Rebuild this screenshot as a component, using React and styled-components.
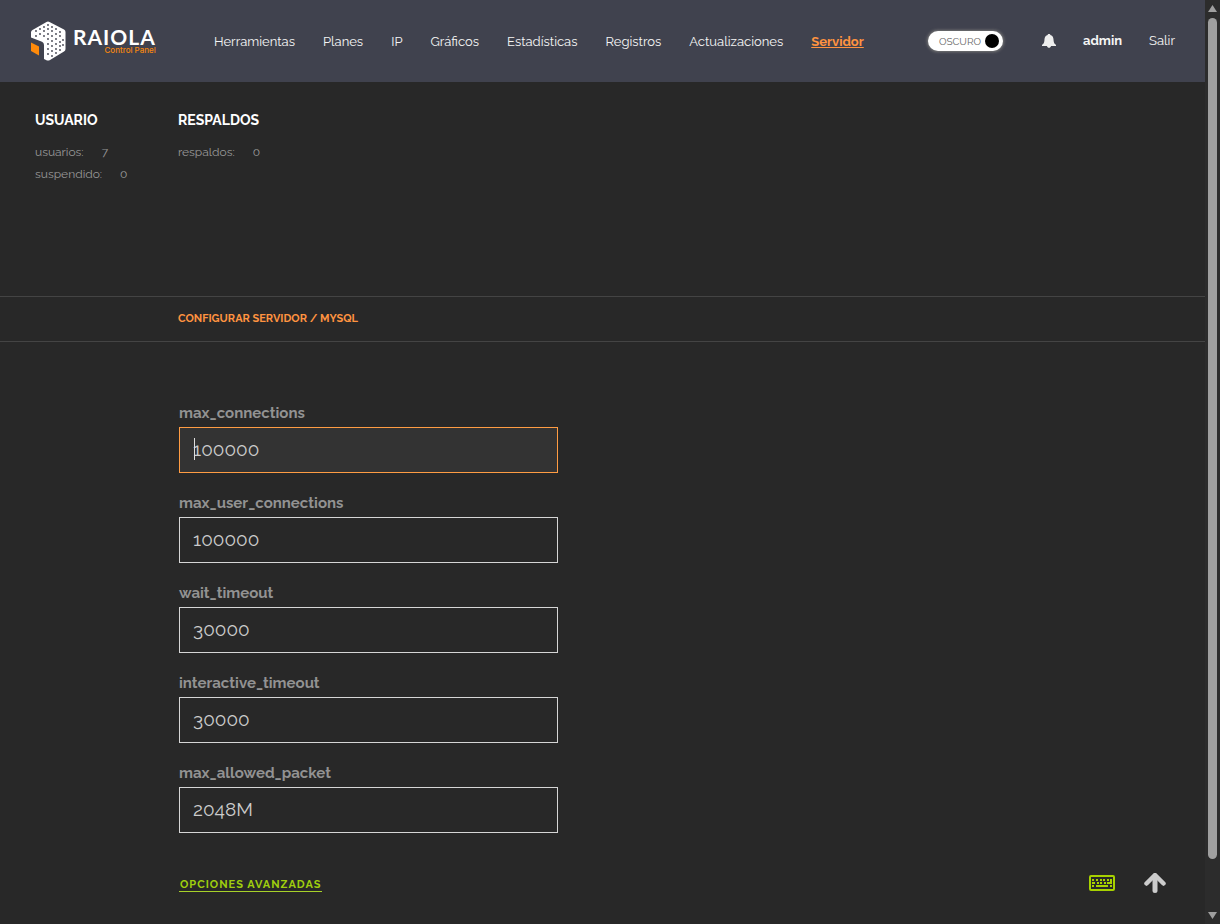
import styled, { createGlobalStyle } from 'styled-components';

const GlobalStyle = createGlobalStyle`
  * {
    box-sizing: border-box;
  }

  body {
    margin: 0;
    background: #282828;
    font-family: Raleway, Lato, sans-serif;
    font-variant-numeric: oldstyle-nums;
  }
`;

const Page = styled.div`
  display: flex;
  min-height: 100vh;
`;

const Content = styled.div`
  flex: 1;
  min-width: 0;
`;

const Header = styled.header`
  display: flex;
  align-items: center;
  height: 82px;
  padding: 0 30px;
  background: #40424e;
`;

const Logo = styled.a`
  display: flex;
  align-items: center;
  gap: 7px;
  width: 184px;
  text-decoration: none;
`;

const Wordmark = styled.span`
  display: flex;
  flex-direction: column;
  align-items: flex-end;
`;

const Brand = styled.span`
  color: #fff;
  font: 700 21px/18px Lato, sans-serif;
  letter-spacing: 1px;
`;

const Tagline = styled.span`
  color: #f7870f;
  font: 500 8px/8px Inter, sans-serif;
`;

const Nav = styled.nav`
  display: flex;
  gap: 28px;
  padding-top: 2px;
`;

const NavLink = styled.a`
  color: ${({ $active }) => ($active ? '#ff9340' : '#f5f5f5')};
  font-size: 13px;
  line-height: 20px;
  font-weight: ${({ $strong, $active }) => ($strong || $active ? 700 : 400)};
  text-decoration: ${({ $active }) => ($active ? 'underline' : 'none')};
`;

const Account = styled.div`
  display: flex;
  align-items: center;
  gap: 27px;
  margin-left: auto;
`;

const ThemeSwitch = styled.label`
  display: flex;
  align-items: center;
  gap: 4px;
  height: 20px;
  margin-right: 12px;
  padding: 0 4px 0 11px;
  border-radius: 10px;
  background: #fff;
  box-shadow: 0 0 3px 1px #777;
  color: #666;
  font-size: 10px;
`;

const ThemeCheck = styled.input`
  width: 14px;
  height: 14px;
  margin: 0;
  border-radius: 50%;
  background: #000;
  appearance: none;
`;

const IconButton = styled.button`
  display: flex;
  padding: 0;
  border: 0;
  background: none;
  color: ${({ $color }) => $color};
`;

const Stats = styled.section`
  display: flex;
  min-height: 214px;
  padding: 27px 35px;
`;

const StatGroup = styled.div`
  width: 143px;
`;

const StatTitle = styled.h2`
  margin: 0 0 10px;
  color: #fff;
  font-size: 14px;
  line-height: 22px;
`;

const StatRow = styled.p`
  display: flex;
  gap: 18px;
  margin: 0;
  color: #999;
  font-size: 12px;
  line-height: 22px;
`;

const Toolbar = styled.div`
  padding: 0 178px;
  border-top: 1px solid #444;
  border-bottom: 1px solid #444;
  color: #ff9340;
  font-size: 11px;
  font-weight: 700;
  line-height: 44px;
`;

const Form = styled.form`
  width: 379px;
  margin: 61px 0 0 179px;
`;

const Field = styled.div`
  display: flex;
  flex-direction: column;
  gap: 3px;
  margin-bottom: 20px;
`;

const FieldLabel = styled.label`
  color: #929292;
  font-size: 15px;
  font-weight: 700;
  line-height: 21px;
`;

const InputWrap = styled.div`
  position: relative;
`;

const TextInput = styled.input`
  display: block;
  width: 100%;
  height: 46px;
  padding: 0 13px 2px;
  border: 1px solid ${({ $active }) => ($active ? '#ff9c43' : '#d6d6d6')};
  background: ${({ $active }) => ($active ? '#333' : '#282828')};
  color: #ccc;
  font: inherit;
  font-size: 19px;
  font-variant-numeric: inherit;
  outline: none;
`;

const Caret = styled.span`
  position: absolute;
  top: 11px;
  left: 15px;
  width: 1px;
  height: 22px;
  background: #ddd;
`;

const AdvancedLink = styled.a`
  display: inline-block;
  margin-top: 25px;
  padding: 0 1px;
  border-bottom: 1px solid #a7d129;
  color: #9fce0e;
  font-size: 11px;
  font-weight: 700;
  letter-spacing: 1px;
  line-height: 13px;
  text-decoration: none;
`;

const Shortcuts = styled.div`
  position: fixed;
  right: 54px;
  bottom: 31px;
  display: flex;
  align-items: center;
  gap: 29px;
`;

const ScrollTrack = styled.div`
  position: sticky;
  top: 0;
  display: flex;
  flex-direction: column;
  align-items: center;
  gap: 6px;
  width: 15px;
  height: 100vh;
  padding: 5px 0;
  background: #2c2c2c;
`;

const ScrollThumb = styled.div`
  width: 9px;
  height: 92%;
  border-radius: 5px;
  background: #9f9f9f;
`;

const ScrollArrow = styled.svg`
  flex: none;
  width: 9px;
  height: 7px;
  margin-top: ${({ $end }) => ($end ? 'auto' : 0)};
  fill: #9f9f9f;
`;

const sections = [
  'Herramientas',
  'Planes',
  'IP',
  'Gráficos',
  'Estadísticas',
  'Registros',
  'Actualizaciones',
  'Servidor',
];

const fields = [
  { name: 'max_connections', value: '100000' },
  { name: 'max_user_connections', value: '100000' },
  { name: 'wait_timeout', value: '30000' },
  { name: 'interactive_timeout', value: '30000' },
  { name: 'max_allowed_packet', value: '2048M' },
];

const LogoMark = () => (
  <svg width="36" height="40" viewBox="0 0 36 40">
    <path
      d="M19.500 1 34 8.500q1.500.8 1.500 2.500v17q0 1.700-1.500 2.500L20 39q-2 1-4 0l-2-1V24q0-2.200-2-3.200L1 16.500V11.500q0-1.700 1.500-2.500L16.500 1q1.500-.9 3 0Z"
      fill="#fff"
    />
    <path d="m1 21.500 8 4V34.500l-8-4.500Z" fill="#ff8a0a" />
    <g fill="#40424e">
      {[
        [18, 4], [14, 6], [22, 6], [10, 8], [18, 8], [26, 8], [6, 10], [14, 10],
        [22, 10], [30, 11], [10, 13], [18, 13], [26, 13], [6, 15], [14, 15],
        [22, 15], [30, 15], [18, 18], [26, 18], [33, 19], [22, 20], [30, 21],
        [18, 23], [26, 23], [22, 25], [30, 25], [33, 24], [18, 28], [26, 28],
        [22, 30], [30, 29], [18, 33], [26, 32], [22, 35],
      ].map(([x, y]) => (
        <circle key={`${x}-${y}`} cx={x} cy={y} r="0.9" />
      ))}
    </g>
  </svg>
);

const BellIcon = () => (
  <svg width="14" height="14" viewBox="0 0 14 14" fill="currentColor">
    <path d="M7 0C8 0 8.300.5 8.400 1 11 1.700 11.500 4 11.600 6.500c.1 2.500 1 3.500 2.400 4.300V12H0v-1.200c1.400-.8 2.300-1.800 2.400-4.300C2.500 4 3 1.700 5.600 1 5.700.5 6 0 7 0ZM5 12h4c-.2 2.400-3.800 2.400-4 0Z" />
  </svg>
);

const KeyboardIcon = () => (
  <svg width="26" height="16" viewBox="0 0 26 16" fill="currentColor">
    <rect x="1" y="1" width="24" height="14" rx="1" fill="none" stroke="currentColor" strokeWidth="2" />
    {[3, 7, 11, 14, 18].map((x) => (
      <rect key={x} x={x} y="4" width="2" height="2" />
    ))}
    {[8, 11, 15].map((x) => (
      <rect key={x} x={x} y="7" width="2" height="2" />
    ))}
    <path d="M3 7h3v2H3zM21 4h2v5h-5V7h3zM3 10h2v2H3zM7 10h12v2H7zM21 10h2v2h-2z" />
  </svg>
);

const ArrowIcon = () => (
  <svg width="22" height="20" viewBox="0 0 22 20" fill="none" stroke="currentColor">
    <path d="m2.500 10.500 8.500-8.500 8.500 8.500" strokeWidth="4.500" strokeLinecap="round" strokeLinejoin="round" />
    <path d="M11 4v13.500" strokeWidth="5" strokeLinecap="round" />
  </svg>
);

const App = () => {
  return (
    <Page>
      <GlobalStyle />
      <Content>
        <Header>
          <Logo href="#">
            <LogoMark />
            <Wordmark>
              <Brand>RAIOLA</Brand>
              <Tagline>Control Panel</Tagline>
            </Wordmark>
          </Logo>
          <Nav>
            {sections.map((name) => (
              <NavLink key={name} href="#" $active={name === 'Servidor'}>
                {name}
              </NavLink>
            ))}
          </Nav>
          <Account>
            <ThemeSwitch>
              OSCURO
              <ThemeCheck type="checkbox" defaultChecked />
            </ThemeSwitch>
            <IconButton aria-label="Notificaciones" $color="#eee">
              <BellIcon />
            </IconButton>
            <NavLink href="#" $strong>
              admin
            </NavLink>
            <NavLink href="#">Salir</NavLink>
          </Account>
        </Header>
        <Stats>
          <StatGroup>
            <StatTitle>USUARIO</StatTitle>
            <StatRow>
              <span>usuarios:</span>
              <span>7</span>
            </StatRow>
            <StatRow>
              <span>suspendido:</span>
              <span>0</span>
            </StatRow>
          </StatGroup>
          <StatGroup>
            <StatTitle>RESPALDOS</StatTitle>
            <StatRow>
              <span>respaldos:</span>
              <span>0</span>
            </StatRow>
          </StatGroup>
        </Stats>
        <Toolbar>CONFIGURAR SERVIDOR / MYSQL</Toolbar>
        <Form>
          {fields.map(({ name, value }, i) => (
            <Field key={name}>
              <FieldLabel htmlFor={name}>{name}</FieldLabel>
              <InputWrap>
                <TextInput id={name} defaultValue={value} $active={i === 0} />
                {i === 0 && <Caret />}
              </InputWrap>
            </Field>
          ))}
          <AdvancedLink href="#">OPCIONES AVANZADAS</AdvancedLink>
        </Form>
      </Content>
      <ScrollTrack>
        <ScrollArrow viewBox="0 0 9 7">
          <path d="M4.500 0 9 7H0Z" />
        </ScrollArrow>
        <ScrollThumb />
        <ScrollArrow viewBox="0 0 9 7" $end>
          <path d="M0 0h9L4.500 7Z" />
        </ScrollArrow>
      </ScrollTrack>
      <Shortcuts>
        <IconButton aria-label="Atajos de teclado" $color="#a7d100">
          <KeyboardIcon />
        </IconButton>
        <IconButton aria-label="Subir" $color="#ccc">
          <ArrowIcon />
        </IconButton>
      </Shortcuts>
    </Page>
  );
};

export default App;
